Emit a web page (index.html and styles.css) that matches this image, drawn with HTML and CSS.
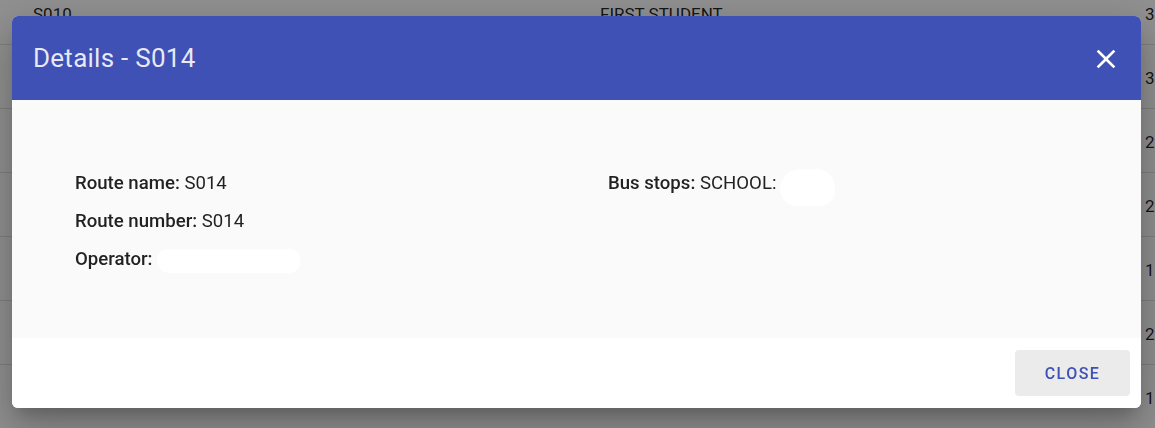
FILE: index.html
```html
<!DOCTYPE html>
<html>
<head>
<meta charset="utf-8">
<link rel="stylesheet" href="styles.css">
</head>
<body>
<div class="table">
  <div class="row"><span>S010</span><span>FIRST STUDENT</span><span>36</span></div>
  <div class="row"><span>S011</span><span>FIRST STUDENT</span><span>36</span></div>
  <div class="row"><span>S012</span><span>FIRST STUDENT</span><span>22</span></div>
  <div class="row"><span>S013</span><span>FIRST STUDENT</span><span>20</span></div>
  <div class="row"><span>S014</span><span>FIRST STUDENT</span><span>12</span></div>
  <div class="row"><span>S015</span><span>FIRST STUDENT</span><span>25</span></div>
  <div class="row"><span>S016</span><span>FIRST STUDENT</span><span>1</span></div>
</div>
<div class="backdrop"></div>
<div class="dialog">
  <div class="dialog-header">
    <h2 class="dialog-title">Details - S014</h2>
    <button class="icon-btn" aria-label="Close">
      <svg viewBox="0 0 24 24" width="32" height="32"><path fill="currentColor" d="M19 6.41 17.59 5 12 10.590 6.41 5 5 6.41 10.59 12 5 17.59 6.41 19 12 13.41 17.59 19 19 17.59 13.41 12z"/></svg>
    </button>
  </div>
  <div class="dialog-body">
    <div class="col">
      <div class="field"><b>Route name:</b> S014</div>
      <div class="field"><b>Route number:</b> S014</div>
      <div class="field"><b>Operator:</b> <span class="redact redact-op"></span></div>
    </div>
    <div class="col">
      <div class="field"><b>Bus stops:</b> SCHOOL: <span class="redact redact-stop"></span></div>
    </div>
  </div>
  <div class="dialog-footer">
    <button class="btn">CLOSE</button>
  </div>
</div>
</body>
</html>
```
FILE: styles.css
```css
html, body {
  margin: 0;
  padding: 0;
  width: 1155px;
  height: 428px;
  overflow: hidden;
  background: #fff;
  font-family: Roboto, "Liberation Sans", sans-serif;
}
.table {
  margin-top: -19px;
}
.row {
  height: 64px;
  display: grid;
  grid-template-columns: 567px 545px 1fr;
  align-items: center;
  padding-left: 33px;
  padding-top: 3px;
  box-sizing: border-box;
  border-bottom: 1px solid rgba(0,0,0,0.12);
  font-size: 17px;
  color: rgba(0,0,0,0.87);
  white-space: nowrap;
}
.backdrop {
  position: fixed;
  inset: 0;
  background: rgba(0,0,0,0.43);
}
.dialog {
  position: absolute;
  left: 12px;
  top: 16px;
  width: 1129px;
  border-radius: 6px;
  overflow: hidden;
  background: #fff;
  box-shadow: 0 11px 15px -7px rgba(0,0,0,.2), 0 24px 38px 3px rgba(0,0,0,.14), 0 9px 46px 8px rgba(0,0,0,.12);
}
.dialog-header {
  height: 84px;
  background: #3f51b5;
  display: flex;
  align-items: center;
  justify-content: space-between;
  padding: 0 11px 0 21px;
}
.dialog-title {
  margin: 0;
  font-size: 26px;
  font-weight: 400;
  color: rgba(255,255,255,0.88);
  letter-spacing: 0.01em;
}
.icon-btn {
  border: 0;
  background: transparent;
  color: #fff;
  padding: 0;
  width: 48px;
  height: 48px;
  display: flex;
  align-items: center;
  justify-content: center;
  margin-top: 1px;
}
.dialog-body {
  background: #fafafa;
  display: grid;
  grid-template-columns: 533px 1fr;
  padding: 71px 63px 67px;
  font-size: 18.6px;
  color: rgba(0,0,0,0.87);
}
.field {
  line-height: 24px;
  height: 24px;
  margin-bottom: 14px;
  white-space: nowrap;
}
.col .field:last-child {
  margin-bottom: 0;
}
.field b {
  font-weight: 500;
}
.redact {
  display: inline-block;
  background: #fff;
}
.redact-op {
  width: 143px;
  height: 24px;
  border-radius: 12px 10px 12px 14px;
  margin: -8px 0 -8px 0;
  vertical-align: 0;
}
.redact-stop {
  width: 55px;
  height: 37px;
  border-radius: 24px 22px 18px 20px;
  margin: -14px 0 -14px -1px;
  vertical-align: -3px;
}
.dialog-footer {
  height: 70px;
  box-sizing: border-box;
  display: flex;
  justify-content: flex-end;
  align-items: flex-start;
  padding: 12px 11px 12px;
  background: #fff;
}
.btn {
  width: 115px;
  height: 46px;
  border: 0;
  border-radius: 4px;
  background: #ebebeb;
  color: #3f51b5;
  font-family: Roboto, "Liberation Sans", sans-serif;
  font-size: 16px;
  font-weight: 500;
  letter-spacing: 0.09em;
  padding: 0;
}
```
